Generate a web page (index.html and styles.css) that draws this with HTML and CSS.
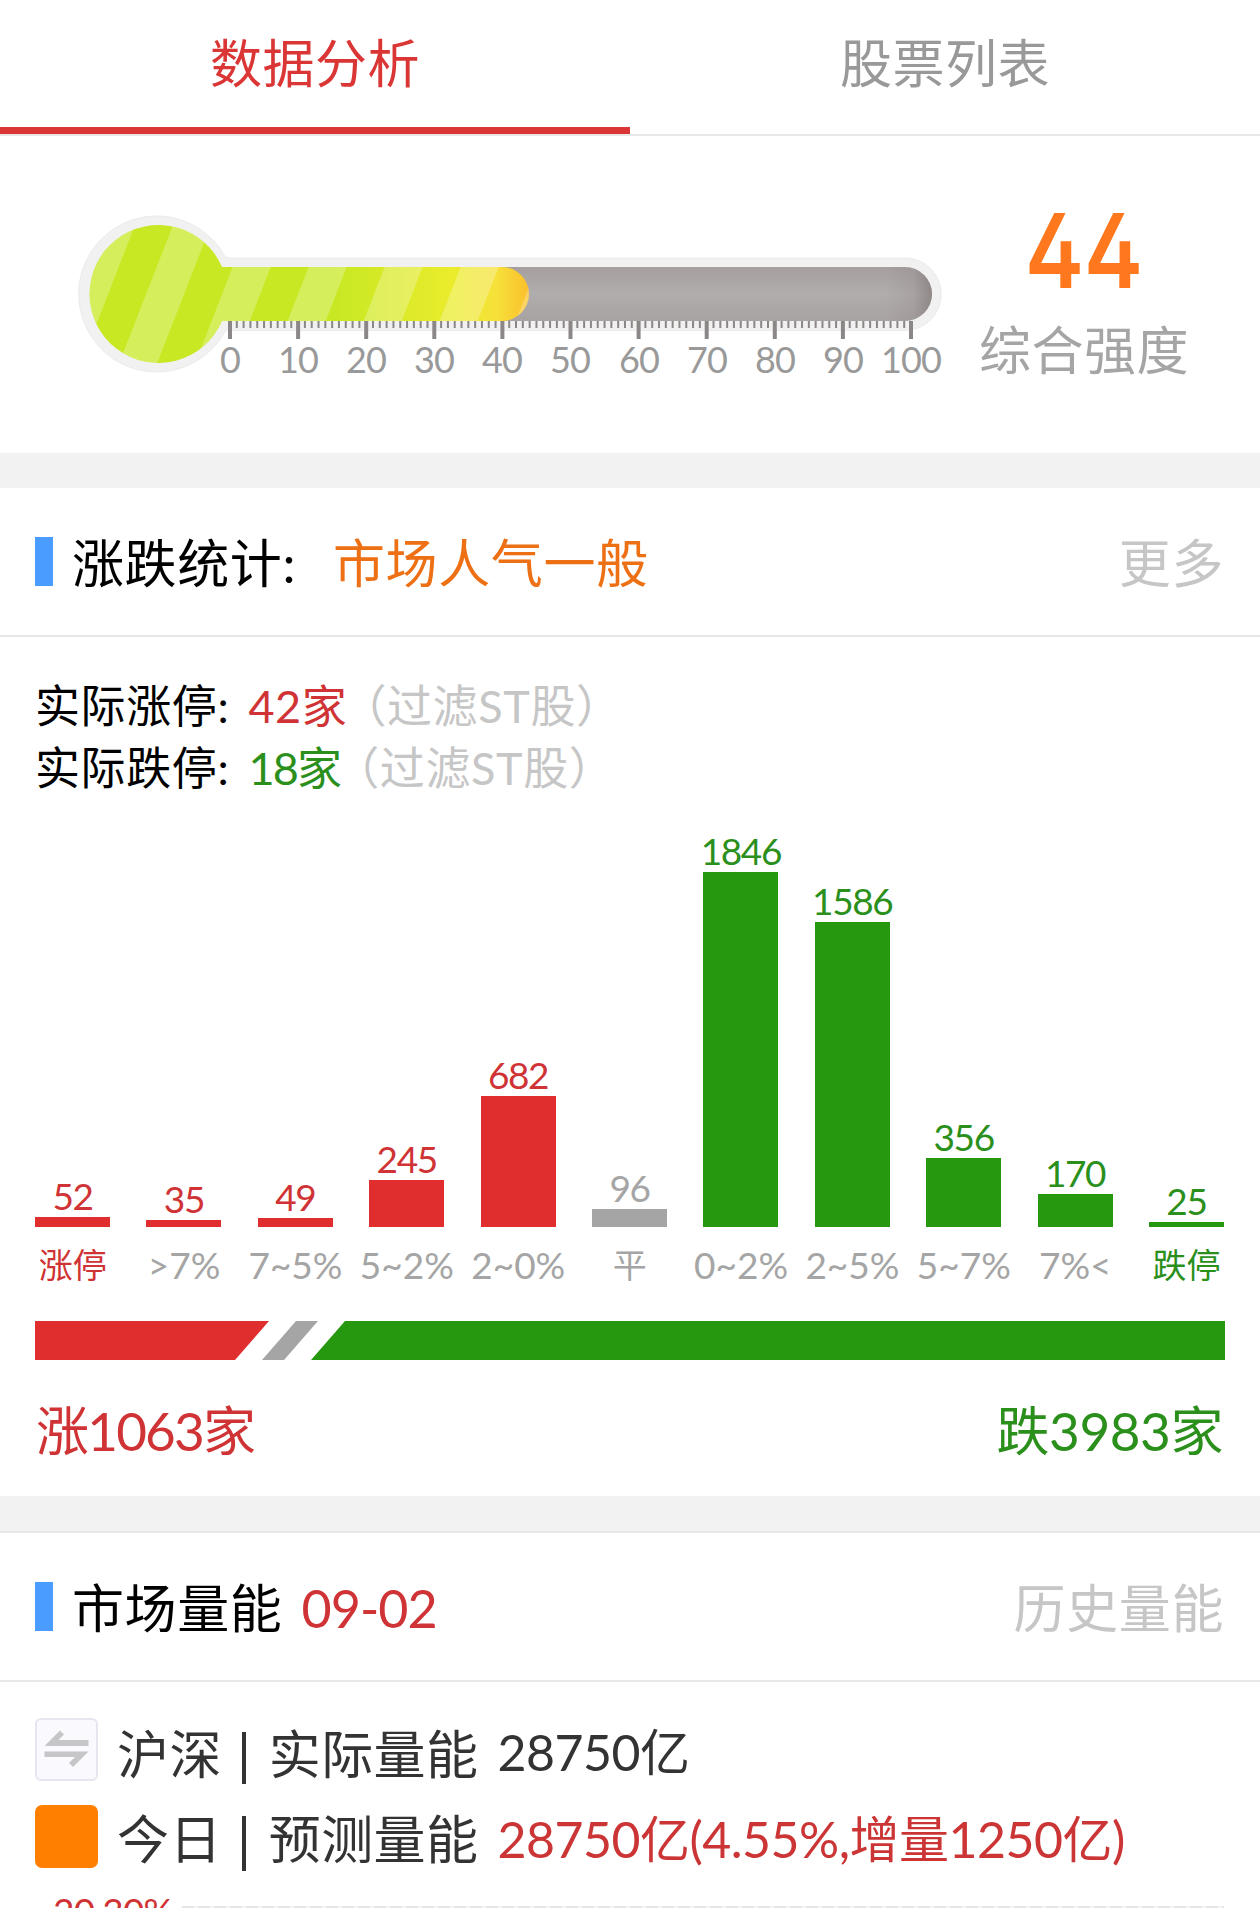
FILE: index.html
```
<!DOCTYPE html>
<html lang="zh-CN">
<head>
    <meta charset="UTF-8">
    <meta name="viewport" content="width=device-width, initial-scale=1">
    <title>数据分析</title>
    <link rel="stylesheet" href="styles.css">
</head>
<body>
    <nav class="tabs">
        <a class="tab active">数据分析</a>
        <a class="tab">股票列表</a>
    </nav>

    <section class="strength">
        <svg class="thermo" width="900" height="190" viewBox="0 0 900 190">
            <defs>
                <linearGradient id="tube" x1="0" y1="0" x2="0" y2="1">
                    <stop offset="0" stop-color="#a59f9f"/>
                    <stop offset="0.5" stop-color="#b1adac"/>
                    <stop offset="1" stop-color="#a8a2a2"/>
                </linearGradient>
                <linearGradient id="tubeEnd" gradientUnits="userSpaceOnUse" x1="825" y1="0" x2="872" y2="0">
                    <stop offset="0" stop-color="#857b7b" stop-opacity="0"/>
                    <stop offset="0.6" stop-color="#857b7b" stop-opacity="0.2"/>
                    <stop offset="1" stop-color="#857b7b" stop-opacity="0.75"/>
                </linearGradient>
                <linearGradient id="fill" gradientUnits="userSpaceOnUse" x1="0" y1="0" x2="469" y2="0">
                    <stop offset="0.58" stop-color="#c7e823"/>
                    <stop offset="0.84" stop-color="#ebec2c"/>
                    <stop offset="0.93" stop-color="#f6e13a"/>
                    <stop offset="1" stop-color="#fbbf2b"/>
                </linearGradient>
                <pattern id="stripes" width="76" height="200" patternUnits="userSpaceOnUse" patternTransform="translate(46.8 0) skewX(-21.3)">
                    <rect width="38" height="200" fill="#fff" fill-opacity="0.26"/>
                </pattern>
                <path id="liquid" d="M442 67H162A69 69 0 1 0 162 121H442A27 27 0 0 0 442 67Z"/>
            </defs>
            <!-- 外壳 -->
            <path d="M845 58H169Q166 58 164.500 55.500A78 78 0 1 0 164.500 132.500L166 130.500H845A36 36 0 0 0 845 58Z" fill="#f1f1f1" stroke="#ebebeb"/>
            <path d="M160 67H845A27 27 0 0 1 845 121H160Z" fill="url(#tube)"/>
            <path d="M800 67H845A27 27 0 0 1 845 121H800Z" fill="url(#tubeEnd)"/>
            <use href="#liquid" fill="url(#fill)"/>
            <use href="#liquid" fill="url(#stripes)"/>
            <!-- 刻度 -->
            <path class="tick" d="M169 124.500H852" stroke-width="7" stroke-dasharray="2 4.81"/>
            <path class="tick" d="M168 130H853" stroke-width="18" stroke-dasharray="4 64.1"/>
            <g class="scale">
                <text x="170" y="173">0</text>
                <text x="238" y="173">10</text>
                <text x="306" y="173">20</text>
                <text x="374" y="173">30</text>
                <text x="442" y="173">40</text>
                <text x="510" y="173">50</text>
                <text x="579" y="173">60</text>
                <text x="647" y="173">70</text>
                <text x="715" y="173">80</text>
                <text x="783" y="173">90</text>
                <text x="851" y="173">100</text>
            </g>
        </svg>
        <div class="score">
            <div class="score-num">44</div>
            <div class="score-name">综合强度</div>
        </div>
    </section>

    <section class="card">
        <header class="card-head">
            <i class="mark"></i>
            <h2>涨跌统计:</h2>
            <span class="mood">市场人气一般</span>
            <a class="more">更多</a>
        </header>
        <div class="limits">
            <p>实际涨停: <span class="count red">42家</span><span class="note">（过滤ST股）</span></p>
            <p>实际跌停: <span class="count narrow green">18家</span><span class="note">（过滤ST股）</span></p>
        </div>
        <div class="chart">
            <div class="col red"><b>52</b><i style="height:10px"></i></div>
            <div class="col red"><b>35</b><i style="height:7px"></i></div>
            <div class="col red"><b>49</b><i style="height:9px"></i></div>
            <div class="col red"><b>245</b><i style="height:47px"></i></div>
            <div class="col red"><b>682</b><i style="height:131px"></i></div>
            <div class="col grey"><b>96</b><i style="height:18px"></i></div>
            <div class="col green"><b>1846</b><i style="height:355px"></i></div>
            <div class="col green"><b>1586</b><i style="height:305px"></i></div>
            <div class="col green"><b>356</b><i style="height:69px"></i></div>
            <div class="col green"><b>170</b><i style="height:33px"></i></div>
            <div class="col green"><b>25</b><i style="height:5px"></i></div>
        </div>
        <div class="axis">
            <span class="red cn">涨停</span>
            <span>&gt;7%</span>
            <span>7~5%</span>
            <span>5~2%</span>
            <span>2~0%</span>
            <span class="cn">平</span>
            <span>0~2%</span>
            <span>2~5%</span>
            <span>5~7%</span>
            <span>7%&lt;</span>
            <span class="green cn">跌停</span>
        </div>
        <svg class="ratio" width="1190" height="39" viewBox="0 0 1190 39">
            <path d="M0 0H234L200 39H0Z" fill="#e02e2e"/>
            <path d="M261 0H283L249 39H227Z" fill="#a5a5a5"/>
            <path d="M310 0H1190V39H276Z" fill="#25980f"/>
        </svg>
        <div class="totals">
            <span class="up red">涨1063家</span>
            <span class="green">跌3983家</span>
        </div>
    </section>

    <section class="card volume">
        <header class="card-head">
            <i class="mark"></i>
            <h2>市场量能</h2>
            <span class="date red">09-02</span>
            <a class="more">历史量能</a>
        </header>
        <div class="row">
            <svg class="swap" width="63" height="63" viewBox="0 0 63 63">
                <rect x="1" y="1" width="61" height="61" rx="5" fill="#f9f9fe" stroke="#e6e6ee" stroke-width="2"/>
                <path d="M9.500 28L25 12.500L29 16.500L23.500 22H53.500V28Z" fill="#c6c6c9"/>
                <path d="M53.500 33.500L38 49L34 45L40 39H9.500V33.500Z" fill="#c6c6c9"/>
            </svg>
            <span class="label">沪深</span><i class="sep"></i><span class="label kind">实际量能</span>
            <span class="value">28750亿</span>
        </div>
        <div class="row today">
            <i class="box"></i>
            <span class="label">今日</span><i class="sep"></i><span class="label kind">预测量能</span>
            <span class="value red">28750亿(4.55%,增量1250亿)</span>
        </div>
        <div class="plot">
            <span class="red">20.30%</span>
            <i></i>
        </div>
    </section>
</body>
</html>
```
FILE: styles.css
```
* {
    box-sizing: border-box;
}

body {
    margin: 0;
    width: 1260px;
    height: 1908px;
    overflow: hidden;
    background: #fff;
    color: #000;
    font-family: Lato, "Noto Sans CJK SC", sans-serif;
    font-size: 52px;
}

h2, p {
    margin: 0;
    font-weight: 400;
    font-size: inherit;
}

i, b {
    font-style: normal;
    font-weight: 400;
}

.red { color: #d03335; }
.green { color: #2b8f1c; }
.grey { color: #a5a5a5; }

/* 顶部标签 */
.tabs {
    display: flex;
    height: 136px;
    border-bottom: 2px solid #e8e8e8;
}

.tab {
    flex: 1;
    height: 134px;
    line-height: 127px;
    text-align: center;
    color: #999;
    letter-spacing: 0.5px;
}

.tab.active {
    height: 136px;
    color: #db3636;
    background: linear-gradient(#db3636, #db3636) 0 127px / 100% 7px no-repeat;
}

/* 综合强度 */
.strength {
    display: flex;
    height: 317px;
    padding: 64px 0 0 60px;
}

.thermo {
    flex: none;
}

.tick {
    fill: none;
    stroke: #8c8787;
}

.scale text {
    font-size: 36px;
    letter-spacing: -0.9px;
    fill: #999;
    text-anchor: middle;
}

.score {
    width: 248px;
    text-align: center;
}

.score-num {
    height: 110px;
    line-height: 102px;
    font-family: Inter, sans-serif;
    font-size: 103px;
    font-weight: 600;
    font-feature-settings: "cv02";
    color: #ff781e;
    transform: scaleX(0.86);
}

.score-name {
    line-height: 81px;
    color: #a5a5a5;
    letter-spacing: 0.5px;
}

/* 卡片 */
.card {
    border-top: 35px solid #f2f2f2;
}

.card-head {
    display: flex;
    align-items: center;
    height: 149px;
    padding: 0 36px 0 35px;
    border-bottom: 2px solid #e8e8e8;
    line-height: 60px;
    letter-spacing: 0.6px;
}

.card-head h2, .card-head span, .card-head a {
    padding-top: 3px;
}

.mark {
    width: 18px;
    height: 49px;
    margin-right: 19px;
    background: #4a9cff;
}

.mood {
    margin-left: 37px;
    color: #ee7015;
}

.more {
    margin-left: auto;
    color: #c6c6c6;
}

.limits {
    height: 187px;
    padding: 38px 35px 0;
    font-size: 45px;
    line-height: 62px;
    letter-spacing: 0.6px;
}

.limits p {
    display: flex;
    white-space: pre;
}

.count {
    margin-left: 7px;
}

.narrow {
    letter-spacing: -1.8px;
}

.note {
    margin-left: -6px;
    color: #c6c6c6;
}

.chart {
    display: flex;
    justify-content: space-between;
    align-items: flex-end;
    height: 403px;
    padding: 0 36px 0 35px;
}

.col {
    width: 75px;
    display: flex;
    flex-direction: column;
    align-items: center;
}

.col b {
    font-size: 37px;
    line-height: 43px;
    letter-spacing: -1.4px;
}

.col i {
    width: 75px;
    background: #e02e2e;
}

.col.grey i { background: #a5a5a5; }
.col.green i { background: #25980f; }

.axis {
    display: grid;
    grid-template-columns: repeat(11, 111.4px);
    height: 94px;
    padding-left: 17px;
    font-size: 37px;
    line-height: 75px;
    color: #a5a5a5;
    text-align: center;
}

.axis .cn {
    font-size: 34px;
}

.axis .red { color: #d03335; }
.axis .green { color: #2b8f1c; }

.ratio {
    display: block;
    margin-left: 35px;
}

.totals {
    display: flex;
    justify-content: space-between;
    height: 136px;
    padding: 0 37px 0 36px;
    line-height: 141px;
    font-size: 53px;
    letter-spacing: -0.4px;
}

.up {
    letter-spacing: -1.8px;
}

.volume .card-head {
    height: 151px;
    border-top: 2px solid #e8e8e8;
}

.date {
    margin-left: 19px;
    letter-spacing: -0.9px;
}

.row {
    display: flex;
    align-items: center;
    height: 63px;
    margin: 36px 35px 0;
    color: #333;
}

.today {
    margin-top: 24px;
}

.box {
    width: 63px;
    height: 63px;
    border-radius: 7px;
    background: #ff7f00;
}

.label {
    margin-left: 19px;
    padding-top: 10px;
    line-height: 63px;
    letter-spacing: 0.4px;
}

.today .label {
    padding-top: 6px;
}

.sep {
    width: 4px;
    height: 52px;
    margin-left: 20px;
    margin-top: 16px;
    background: #333;
}

.today .sep {
    height: 55px;
    margin-top: 13px;
}

.kind {
    margin-left: 23px;
}

.value {
    margin-left: 19px;
    padding-top: 4px;
    font-size: 50px;
    line-height: 60px;
    letter-spacing: -0.5px;
    white-space: nowrap;
}

.value.red {
    color: #cc3535;
}

.plot {
    display: flex;
    height: 40px;
    overflow: hidden;
    padding: 20px 36px 0 53px;
}

.plot span {
    font-size: 37px;
    line-height: 46px;
    letter-spacing: -0.8px;
}

.plot i {
    flex: 1;
    height: 3px;
    margin: 18px 0 0 10px;
    background: repeating-linear-gradient(90deg, #e6e6e6 0 12px, #f4f4f4 12px 16px);
}
```
